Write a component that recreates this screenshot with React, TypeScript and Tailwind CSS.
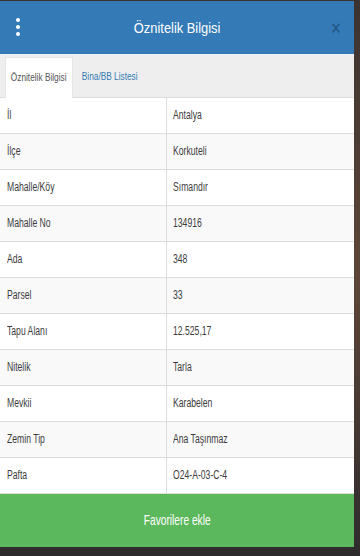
import React from 'react';

const rows: [string, string][] = [
  ['İl', 'Antalya'],
  ['İlçe', 'Korkuteli'],
  ['Mahalle/Köy', 'Sımandır'],
  ['Mahalle No', '134916'],
  ['Ada', '348'],
  ['Parsel', '33'],
  ['Tapu Alanı', '12.525,17'],
  ['Nitelik', 'Tarla'],
  ['Mevkii', 'Karabelen'],
  ['Zemin Tip', 'Ana Taşınmaz'],
  ['Pafta', 'O24-A-03-C-4'],
];

export default function App() {
  return (
    <div
      className="w-[360px] h-[556px] overflow-hidden bg-gradient-to-b from-[#3b3330] via-[#5d4637] to-[#2e2b2d] pt-px"
      style={{ fontFamily: '"Liberation Sans", Arial, sans-serif' }}
    >
      <div className="w-[354px] h-[546px] flex flex-col bg-white">
        {/* Header */}
        <div className="h-[53px] shrink-0 bg-[#337ab7] flex items-center">
          <div className="w-[36px] flex flex-col items-center gap-[3px] -mt-[2px]">
            <span className="w-[4px] h-[4px] rounded-full bg-white" />
            <span className="w-[4px] h-[4px] rounded-full bg-white" />
            <span className="w-[4px] h-[4px] rounded-full bg-white" />
          </div>
          <div className="flex-1 text-center text-white text-[15.5px] leading-none">
            <span className="inline-block scale-x-[0.83] whitespace-nowrap">Öznitelik Bilgisi</span>
          </div>
          <div className="w-[36px] flex justify-center pr-[1px] text-black/25 text-[20px] font-bold leading-none">
            <span className="inline-block scale-x-[0.8]">×</span>
          </div>
        </div>

        {/* Tabs */}
        <div className="h-[44px] shrink-0 bg-[#eeeeee] flex items-end px-[5px] border-b border-[#dddddd]">
          <div className="w-[68px] h-[41px] -mb-px bg-white border-x border-t border-[#e6e6e6] flex items-center justify-center text-[11.5px] text-[#555555]">
            <span className="inline-block scale-x-[0.72] whitespace-nowrap">Öznitelik Bilgisi</span>
          </div>
          <div className="w-[74px] h-[41px] flex items-center justify-center text-[11.5px] text-[#337ab7]">
            <span className="inline-block scale-x-[0.72] whitespace-nowrap">Bina/BB Listesi</span>
          </div>
        </div>

        {/* Table */}
        <div className="flex-1 flex flex-col">
          {rows.map(([k, v], i) => (
            <div
              key={k}
              className={`h-[36px] shrink-0 flex text-[12.5px] text-[#3c3c3c] border-b border-[#dddddd] ${
                i % 2 === 1 ? 'bg-[#f9f9f9]' : 'bg-white'
              }`}
            >
              <div className="w-[167px] border-r border-[#dddddd] flex items-center pl-[7px]">
                <span className="inline-block scale-x-[0.69] origin-left whitespace-nowrap">{k}</span>
              </div>
              <div className="flex-1 flex items-center pl-[6px]">
                <span className="inline-block scale-x-[0.69] origin-left whitespace-nowrap">{v}</span>
              </div>
            </div>
          ))}
        </div>

        {/* Button */}
        <div className="h-[53px] shrink-0 bg-[#5cb85c] flex items-center justify-center text-white text-[15px]">
          <span className="inline-block scale-x-[0.68] whitespace-nowrap">Favorilere ekle</span>
        </div>
      </div>
    </div>
  );
}
